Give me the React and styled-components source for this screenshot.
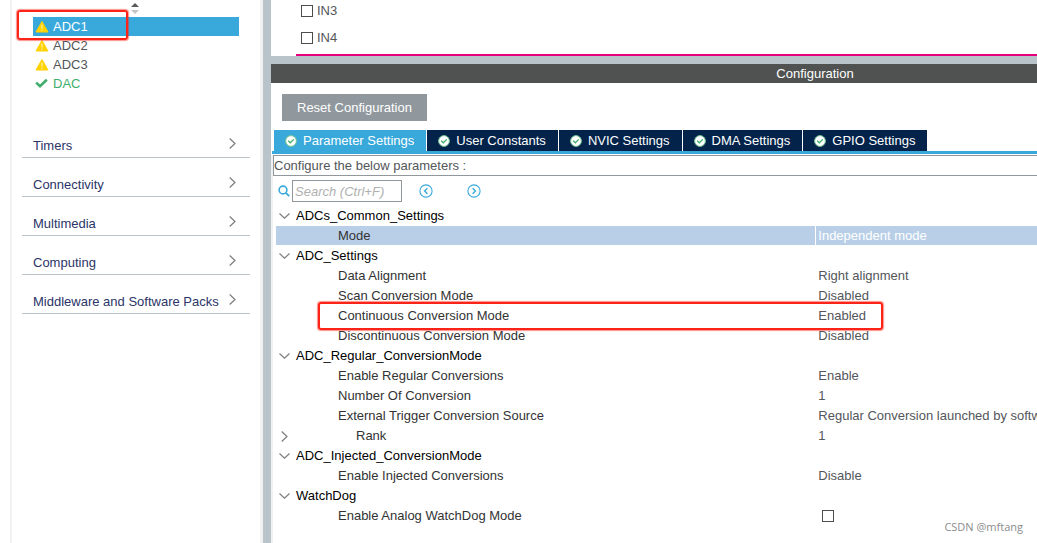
import React, { useState } from "react";
import styled, { createGlobalStyle } from "styled-components";

const GlobalStyle = createGlobalStyle`
  * {
    box-sizing: border-box;
  }

  body {
    margin: 0;
    background: #ffffff;
    font-family: "Liberation Sans", Arial, sans-serif;
    font-size: 13px;
    line-height: 16px;
    color: #53565a;
  }

  button,
  input {
    font: inherit;
  }
`;

const Page = styled.div`
  position: relative;
  display: flex;
  min-height: 100vh;
  overflow: hidden;
`;

const Sidebar = styled.nav`
  flex: 0 0 253px;
  margin-left: 10px;
  padding: 3px 10px 0;
  border-left: 2px solid #f1f1f1;
  border-right: 3px solid #f1f1f1;
`;

const SortIcon = styled.svg`
  display: block;
  width: 8px;
  height: 11px;
  margin: 0 auto 3px 109px;
`;

const PeripheralList = styled.ul`
  list-style: none;
  margin: 0 11px 26px;
  padding: 0;
`;

const Peripheral = styled.li`
  position: relative;
  display: flex;
  align-items: center;
  gap: 4px;
  height: 19px;
  padding-left: 2px;
  color: ${(props) => props.$color || "#53565a"};
  background: ${(props) => (props.$selected ? "#39a9dc" : "transparent")};
`;

const Highlight = styled.span`
  position: absolute;
  z-index: 1;
  left: ${(props) => props.$left}px;
  top: ${(props) => props.$top}px;
  width: ${(props) => props.$width}px;
  height: ${(props) => props.$height}px;
  border: 2px solid #fc2418;
  border-radius: 3px;
  box-shadow: 0 0 1px 1px rgba(252, 36, 24, 0.5);
  pointer-events: none;
`;

const Category = styled.button`
  display: flex;
  align-items: flex-end;
  justify-content: space-between;
  width: 100%;
  height: 39px;
  padding: 0 14px 3px 11px;
  border: 0;
  border-bottom: 1px solid #b8c4ca;
  background: none;
  color: #2b3467;
  text-align: left;
  white-space: nowrap;
  cursor: pointer;

  svg {
    margin-bottom: 5px;
  }
`;

const Main = styled.main`
  display: flex;
  flex: 1;
  flex-direction: column;
  min-width: 0;
  border-left: 8px solid #b8c4ca;
`;

const ModePanel = styled.section`
  height: 64px;
  padding-left: 25px;
  border-bottom: 8px solid #b8c4ca;
`;

const Channels = styled.div`
  display: flex;
  flex-direction: column;
  gap: 11px;
  height: 56px;
  padding: 3px 5px 0;
  border-bottom: 2px solid #e6007e;
`;

const Channel = styled.label`
  display: flex;
  align-items: center;
  gap: 4px;
`;

const CheckBox = styled.input`
  appearance: none;
  flex: none;
  width: 12px;
  height: 12px;
  margin: 0;
  border: 1px solid #4d4d4d;
  background: #ffffff;

  &:checked {
    background: #39a9dc;
  }
`;

const Title = styled.h1`
  margin: 0;
  padding-left: 322px;
  background: #4f5251;
  color: #ffffff;
  font-size: 13px;
  font-weight: 400;
  line-height: 19px;
  text-align: center;
`;

const ResetButton = styled.button`
  align-self: flex-start;
  height: 27px;
  margin: 11px 0 9px 11px;
  padding: 0 15px;
  border: 0;
  background: #90989e;
  color: #ffffff;
  cursor: pointer;
`;

const Tabs = styled.div`
  display: flex;
  gap: 1px;
  margin-left: 1px;
  padding-left: 2px;
  border-bottom: 3px solid #39a9dc;
`;

const Tab = styled.button`
  display: flex;
  align-items: center;
  gap: 6px;
  height: 21px;
  padding: 0 12px 0 11px;
  border: 0;
  background: ${(props) => (props.$active ? "#39a9dc" : "#03234b")};
  color: #ffffff;
  white-space: nowrap;
  cursor: pointer;
`;

const Body = styled.div`
  flex: 1;
  margin-top: 1px;
  border-left: 2px solid #f1f1f1;
`;

const Hint = styled.p`
  margin: 0;
  padding: 2px 0 1px;
  border: 1px solid #90989e;
  border-right: 0;
`;

const SearchBar = styled.div`
  display: flex;
  align-items: center;
  height: 30px;
  padding-left: 5px;
`;

const SearchLabel = styled.label`
  display: flex;
  align-items: center;
  gap: 2px;
  margin-right: 17px;
`;

const SearchInput = styled.input`
  width: 110px;
  height: 22px;
  padding: 0 2px;
  border: 1px solid #90989e;

  &::placeholder {
    color: #b0b0b0;
    font-style: italic;
  }
`;

const NavButton = styled.button`
  display: flex;
  margin-right: 34px;
  padding: 0;
  border: 0;
  background: none;
  cursor: pointer;
`;

const Tree = styled.table`
  width: 100%;
  padding-left: 3px;
  border-spacing: 0;
  table-layout: fixed;
`;

const TreeRow = styled.tr`
  position: relative;
  height: 20px;
`;

const NameCell = styled.td`
  width: 71%;
  height: 20px;
  padding: 1px 0 0;
  border-right: 1px solid #ffffff;
  border-bottom: 1px solid #ffffff;
  background: ${(props) => (props.$selected ? "#b9cfe7" : "transparent")};
  background-clip: padding-box;
  color: ${(props) => (props.$group ? "#000000" : "#333333")};
`;

const NameContent = styled.div`
  display: flex;
  align-items: center;
  height: 18px;
`;

const Toggle = styled.button`
  display: flex;
  justify-content: center;
  width: 16px;
  margin-right: 4px;
  padding: 0;
  border: 0;
  background: none;
  cursor: pointer;
`;

const Indent = styled.span`
  padding-left: ${(props) => props.$depth}px;
`;

const ValueCell = styled.td`
  height: 20px;
  padding: 1px 0 0 2px;
  border-bottom: 1px solid #ffffff;
  background: ${(props) => (props.$selected ? "#b9cfe7" : "transparent")};
  background-clip: padding-box;
  color: ${(props) => (props.$selected ? "#ffffff" : "#53565a")};
  white-space: nowrap;
  overflow: hidden;

  input {
    display: block;
    margin-left: 4px;
  }
`;

const Watermark = styled.span`
  position: absolute;
  right: 14px;
  bottom: 8px;
  color: #8c8c8c;
  font-family: "Open Sans", sans-serif;
  font-size: 11px;
`;

const WarningIcon = () => (
  <svg width="14" height="13" viewBox="0 0 14 13">
    <path d="M7 1.5 L13 12 H1 Z" fill="#ffd200" stroke="#ffd200" strokeLinejoin="round" />
    <path d="M7 4.5 V8.5 M7 9.7 V11" stroke="#fff3b8" strokeWidth="1.1" />
  </svg>
);

const CheckIcon = () => (
  <svg width="14" height="13" viewBox="0 0 14 13">
    <path d="M1.2 5.6 L5 9.2 L11.8 2.8" fill="none" stroke="#3fae6a" strokeWidth="2.6" />
  </svg>
);

const TabIcon = () => (
  <svg width="12" height="12" viewBox="0 0 12 12">
    <circle cx="6" cy="6" r="5.4" fill="#ffffff" stroke="#6fc492" strokeWidth="1" />
    <path d="M3.2 5.8 L5.3 7.8 L8.8 4.4" fill="none" stroke="#3fae6a" strokeWidth="1.3" />
  </svg>
);

const ChevronIcon = ({ down }) =>
  down ? (
    <svg width="11" height="6" viewBox="0 0 11 6">
      <path d="M0.5 0.5 L5.5 5.2 L10.5 0.5" fill="none" stroke="#7d7d7d" strokeWidth="1.2" />
    </svg>
  ) : (
    <svg width="7" height="11" viewBox="0 0 7 11">
      <path d="M0.7 0.5 L6 5.5 L0.7 10.5" fill="none" stroke="#7d7d7d" strokeWidth="1.2" />
    </svg>
  );

const SearchIcon = () => (
  <svg width="12" height="12" viewBox="0 0 12 12">
    <circle cx="5" cy="5" r="3.9" fill="none" stroke="#39a9dc" strokeWidth="1.6" />
    <path d="M7.8 7.8 L11.2 11.2" stroke="#39a9dc" strokeWidth="1.8" />
  </svg>
);

const ArrowIcon = ({ d }) => (
  <svg width="14" height="14" viewBox="0 0 14 14">
    <circle cx="7" cy="7" r="6.1" fill="none" stroke="#39a9dc" strokeWidth="1.1" />
    <path d={d} fill="none" stroke="#39a9dc" strokeWidth="1.4" />
  </svg>
);

const peripherals = [
  { name: "ADC1", selected: true, color: "#ffffff" },
  { name: "ADC2" },
  { name: "ADC3" },
  { name: "DAC", ok: true, color: "#3fae6a" },
];

const categories = [
  "Timers",
  "Connectivity",
  "Multimedia",
  "Computing",
  "Middleware and Software Packs",
];

const tabs = [
  "Parameter Settings",
  "User Constants",
  "NVIC Settings",
  "DMA Settings",
  "GPIO Settings",
];

const rows = [
  { name: "ADCs_Common_Settings", group: true },
  { name: "Mode", value: "Independent mode", selected: true },
  { name: "ADC_Settings", group: true },
  { name: "Data Alignment", value: "Right alignment" },
  { name: "Scan Conversion Mode", value: "Disabled" },
  { name: "Continuous Conversion Mode", value: "Enabled", marked: true },
  { name: "Discontinuous Conversion Mode", value: "Disabled" },
  { name: "ADC_Regular_ConversionMode", group: true },
  { name: "Enable Regular Conversions", value: "Enable" },
  { name: "Number Of Conversion", value: "1" },
  {
    name: "External Trigger Conversion Source",
    value: "Regular Conversion launched by software",
  },
  { name: "Rank", value: "1", closed: true },
  { name: "ADC_Injected_ConversionMode", group: true },
  { name: "Enable Injected Conversions", value: "Disable" },
  { name: "WatchDog", group: true },
  { name: "Enable Analog WatchDog Mode", check: true },
];

const depthOf = (row) => {
  if (row.group) return 0;
  if (row.closed) return 60;
  return 62;
};

const App = () => {
  const [activeTab, setActiveTab] = useState(0);

  return (
    <Page>
      <GlobalStyle />
      <Sidebar>
        <SortIcon viewBox="0 0 8 11">
          <path d="M0 4 L4 0 L8 4 Z" fill="#5a5a5a" />
          <path d="M0 7 L4 11 L8 7 Z" fill="#c4c4c4" />
        </SortIcon>

        <PeripheralList>
          {peripherals.map((item) => (
            <Peripheral key={item.name} $selected={item.selected} $color={item.color}>
              {item.ok ? <CheckIcon /> : <WarningIcon />}
              {item.name}
              {item.selected && <Highlight $left={-16} $top={-7} $width={111} $height={30} />}
            </Peripheral>
          ))}
        </PeripheralList>

        {categories.map((name) => (
          <Category key={name} type="button">
            {name}
            <ChevronIcon />
          </Category>
        ))}
      </Sidebar>

      <Main>
        <ModePanel>
          <Channels>
            {["IN3", "IN4"].map((name) => (
              <Channel key={name}>
                <CheckBox type="checkbox" />
                {name}
              </Channel>
            ))}
          </Channels>
        </ModePanel>

        <Title>Configuration</Title>
        <ResetButton type="button">Reset Configuration</ResetButton>

        <Tabs role="tablist">
          {tabs.map((name, idx) => (
            <Tab
              key={name}
              type="button"
              role="tab"
              aria-selected={idx === activeTab}
              $active={idx === activeTab}
              onClick={() => setActiveTab(idx)}
            >
              <TabIcon />
              {name}
            </Tab>
          ))}
        </Tabs>

        <Body>
          <Hint>Configure the below parameters :</Hint>

          <SearchBar>
            <SearchLabel>
              <SearchIcon />
              <SearchInput
                type="text"
                aria-label="Search parameters"
                placeholder="Search (Ctrl+F)"
              />
            </SearchLabel>
            <NavButton type="button" aria-label="Previous match">
              <ArrowIcon d="M8.4 4.2 L5.6 7 L8.4 9.8" />
            </NavButton>
            <NavButton type="button" aria-label="Next match">
              <ArrowIcon d="M5.6 4.2 L8.4 7 L5.6 9.8" />
            </NavButton>
          </SearchBar>

          <Tree>
            <tbody>
              {rows.map((row, idx) => (
                <TreeRow key={row.name}>
                  <NameCell $group={row.group} $selected={row.selected}>
                    <NameContent>
                      {(row.group || row.closed) && (
                        <Toggle type="button" aria-label={`Toggle ${row.name}`}>
                          <ChevronIcon down={row.group} />
                        </Toggle>
                      )}
                      <Indent $depth={row.closed ? 60 : depthOf(row)}>
                        {row.check ? <label htmlFor={`param-${idx}`}>{row.name}</label> : row.name}
                      </Indent>
                    </NameContent>
                    {row.marked && <Highlight $left={42} $top={-4} $width={565} $height={28} />}
                  </NameCell>
                  <ValueCell $selected={row.selected}>
                    {row.check ? <CheckBox id={`param-${idx}`} type="checkbox" /> : row.value}
                  </ValueCell>
                </TreeRow>
              ))}
            </tbody>
          </Tree>
        </Body>
      </Main>

      <Watermark>CSDN @mftang</Watermark>
    </Page>
  );
};

export default App;
